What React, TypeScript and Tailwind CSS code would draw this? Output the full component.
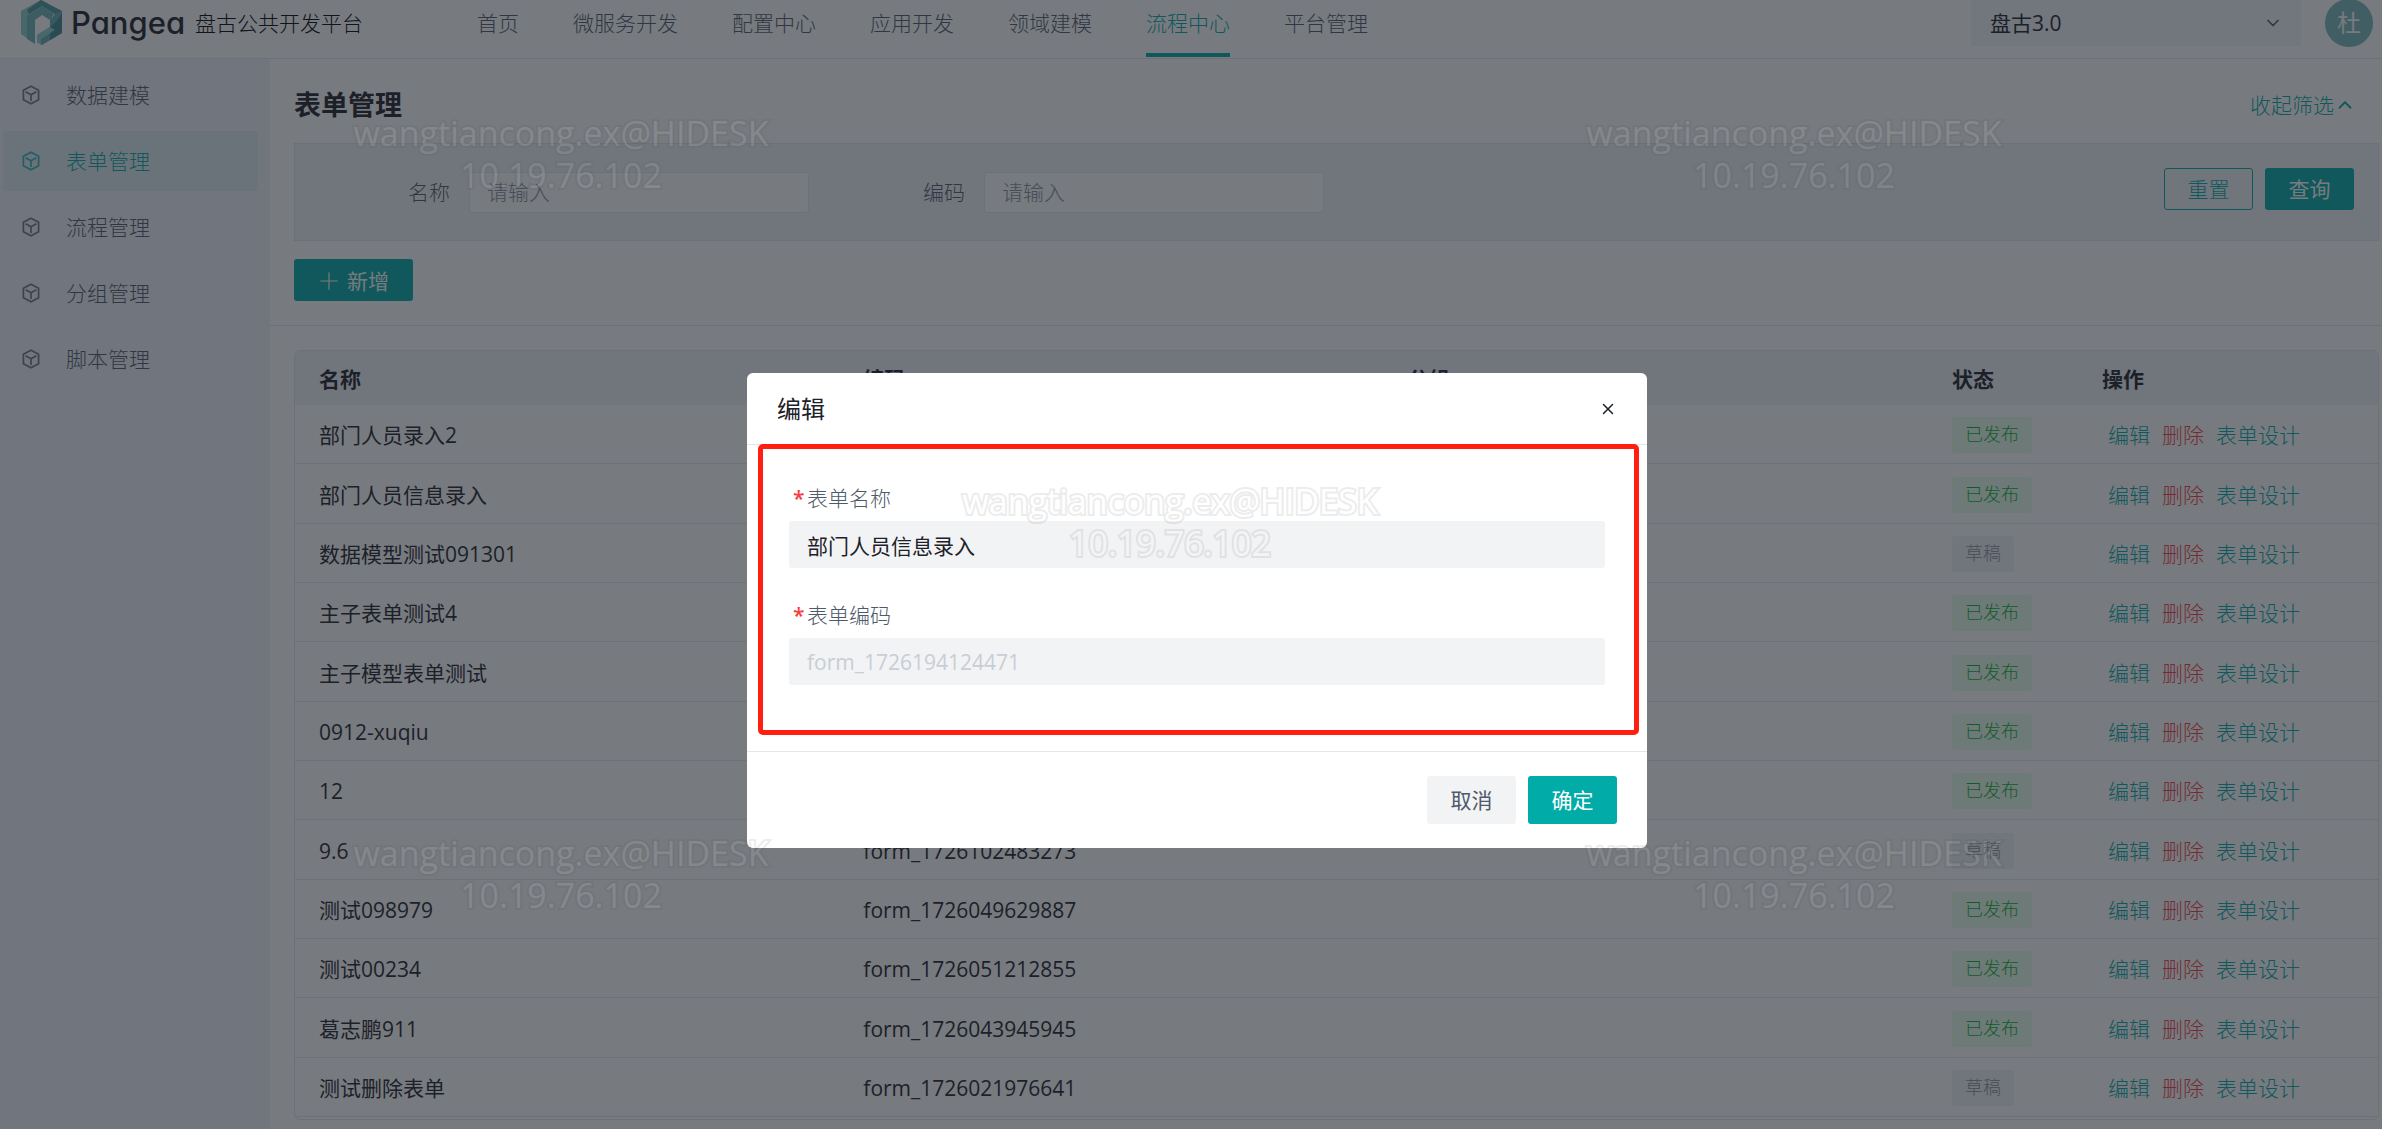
import { ChevronDown, ChevronUp, Plus, X } from 'lucide-react';

const NAV = ['首页', '微服务开发', '配置中心', '应用开发', '领域建模', '流程中心', '平台管理'];
const MENU = ['数据建模', '表单管理', '流程管理', '分组管理', '脚本管理'];

const ROWS = [
  { name: '部门人员录入2', code: 'form_1726196720235', published: true },
  { name: '部门人员信息录入', code: 'form_1726194124471', published: true },
  { name: '数据模型测试091301', code: 'form_1726191730418', published: false },
  { name: '主子表单测试4', code: 'form_1726190276632', published: true },
  { name: '主子模型表单测试', code: 'form_1726133810953', published: true },
  { name: '0912-xuqiu', code: 'form_1726128439027', published: true },
  { name: '12', code: 'form_1726110654781', published: true },
  { name: '9.6', code: 'form_1726102483273', published: false },
  { name: '测试098979', code: 'form_1726049629887', published: true },
  { name: '测试00234', code: 'form_1726051212855', published: true },
  { name: '葛志鹏911', code: 'form_1726043945945', published: true },
  { name: '测试删除表单', code: 'form_1726021976641', published: false },
];

// centre x / top y of every watermark stamp
const MARKS = [
  { x: 561, y: 112 },
  { x: 1794, y: 112 },
  { x: 1170, y: 480 },
  { x: 561, y: 832 },
  { x: 1794, y: 832 },
];

function CubeIcon() {
  return (
    <svg width="20" height="20" viewBox="0 0 20 20" fill="none" stroke="currentColor" strokeWidth="1.7" className="shrink-0 opacity-80">
      <path d="M10 1.2 L17.6 5.2 V14.8 L10 18.8 L2.4 14.8 V5.2 Z M4.6 6.8 L10 9.8 L15.4 6.8 M10 9.8 V16" />
    </svg>
  );
}

function Logo() {
  return (
    <svg width="42" height="46" viewBox="0 0 42 46" className="shrink-0">
      <path d="M0 11 L20 0 L26 3 L10 13 V41 L0 34 Z" fill="#8ccccb" />
      <path d="M6 16 L21 6 L33 14 L29 20 L21 15 L14 20 V44 L6 39 Z" fill="#6bb5b8" />
      <path d="M20 0 L41 11 V17 L35 20 V15 L21 6 L8 14 L6 10 Z" fill="#4a969c" />
      <path d="M41 11 V33 L21 45 L16 42 V35 L29 27 V20 L35 13 Z" fill="#5fadb0" />
      <path d="M41 13 V33 L29 40 V27 L34 23 Z" fill="#3f8b93" />
      <path d="M16 35 L29 27 L34 30 L20 39 V45 L16 42 Z" fill="#8fd0cf" />
    </svg>
  );
}

function Header() {
  return (
    <header className="flex h-[59px] items-start border-b border-[#e5e6eb] bg-white pr-[9px] pl-[21px]">
      <div className="flex h-[46px] w-[456px] items-center">
        <Logo />
        <span className="ml-2 w-[112px] font-[Inter] text-[31px] leading-[46px] font-medium text-[#1d2129] [font-feature-settings:'cv11']">Pangea</span>
        <span className="ml-3 text-black">盘古公共开发平台</span>
      </div>
      <nav className="flex gap-[54px] text-[#4e5969]">
        {NAV.map((item) => (
          <a
            key={item}
            href="#"
            className={item === '流程中心' ? 'h-[57px] border-b-4 border-[#00aba8] leading-[47px] text-[#00aba8]' : 'h-[57px] leading-[47px]'}
          >
            {item}
          </a>
        ))}
      </nav>
      <div className="relative ml-auto">
        <select aria-label="版本" className="h-[46px] w-[330px] appearance-none rounded-b-[3px] bg-[#f2f4f9] pl-[19px] font-normal text-[#1d2129]">
          <option>盘古3.0</option>
        </select>
        <ChevronDown size={20} strokeWidth={2} className="absolute top-[13px] right-[18px] text-[#4e5969]" />
      </div>
      <div className="-mt-px ml-6 size-12 rounded-full bg-[#76b8b8] text-center text-[24px] leading-[48px] font-normal text-white">杜</div>
    </header>
  );
}

function Sidebar() {
  return (
    <aside className="w-[270px] shrink-0 bg-[#f0f3fb] pt-[6px] pr-3 pl-[3px]">
      {MENU.map((item) => (
        <a
          key={item}
          href="#"
          className={
            item === '表单管理'
              ? 'mb-[6px] flex h-[60px] items-center gap-[25px] rounded-[3px] bg-[#e0eef2] pl-[18px] text-[#00aba8]'
              : 'mb-[6px] flex h-[60px] items-center gap-[25px] rounded-[3px] pl-[18px] text-[#4e5969]'
          }
        >
          <CubeIcon />
          {item}
        </a>
      ))}
    </aside>
  );
}

function FilterField({ id, label }: { id: string; label: string }) {
  return (
    <div className="flex items-center">
      <label htmlFor={id} className="mr-[19px] text-[#4e5969]">{label}</label>
      <input
        id={id}
        placeholder="请输入"
        className="h-[41px] w-[340px] rounded-[3px] border border-[#e5e6eb] bg-white px-[17px] placeholder:text-[#86909c]"
      />
    </div>
  );
}

function FormTable() {
  return (
    <div className="mt-6 ml-6 rounded-[6px] border border-[#e5e6eb] pb-[2px]">
      <table className="w-full table-fixed border-separate border-spacing-0 text-left text-[#1d2129]">
        <colgroup>
          <col />
          <col />
          <col />
          <col className="w-[150px]" />
          <col className="w-[300px]" />
        </colgroup>
        <thead>
          <tr className="h-[54px] bg-[#f1f3f8]">
            {['名称', '编码', '分组', '状态', '操作'].map((h) => (
              <th key={h} className="px-6 pt-[2px] font-bold">{h}</th>
            ))}
          </tr>
        </thead>
        <tbody>
          {ROWS.map((row) => (
            <tr key={row.code} className="h-[59px] nth-[3n+2]:h-[60px] [&>td]:border-b [&>td]:border-[#e5e6eb] [&>td]:pt-[2px]">
              <td className="px-6 font-normal">{row.name}</td>
              <td className="px-6 font-normal">{row.code}</td>
              <td className="px-6" />
              <td className="px-6">
                <span
                  className={
                    row.published
                      ? 'block h-9 w-fit rounded-[3px] bg-[#e8ffea] px-[13px] text-[18px] leading-[34px] text-[#00b42a]'
                      : 'block h-9 w-fit rounded-[3px] bg-[#f0f3f8] px-[13px] text-[18px] leading-[34px] text-[#86909c]'
                  }
                >
                  {row.published ? '已发布' : '草稿'}
                </span>
              </td>
              <td className="pl-[30px]">
                <div className="flex gap-3 text-[#00aba8]">
                  <button type="button">编辑</button>
                  <button type="button" className="text-[#f53f3f]">删除</button>
                  <button type="button">表单设计</button>
                </div>
              </td>
            </tr>
          ))}
        </tbody>
      </table>
    </div>
  );
}

function EditModal() {
  return (
    <div role="dialog" aria-label="编辑" className="mt-[373px] w-[900px] rounded-[6px] bg-white">
      <div className="flex h-[72px] items-center justify-between border-b border-[#e5e6eb] px-[30px]">
        <h2 className="text-[24px] font-normal text-[#1d2129]">编辑</h2>
        <button type="button" aria-label="关闭">
          <X size={18} strokeWidth={2} className="text-[#1d2129]" />
        </button>
      </div>

      <div className="relative px-[42px] pt-8 pb-[66px]">
        {/* highlight frame round the form */}
        <div className="pointer-events-none absolute -top-px right-2 bottom-4 left-[11px] rounded-[5px] border-[5px] border-[#ff1e0f]" />
        <label htmlFor="formName" className="flex h-11 items-center gap-1 pb-[2px] pl-1 text-[#4e5969]">
          <span className="w-[10px] font-semibold text-[#f53f3f]">*</span>表单名称
        </label>
        <input
          id="formName"
          defaultValue="部门人员信息录入"
          className="h-[47px] w-full rounded-[3px] bg-[#f2f3f5] px-[18px] font-normal text-[#1d2129]"
        />
        <label htmlFor="formCode" className="mt-[26px] flex h-11 items-center gap-1 pb-[2px] pl-1 text-[#4e5969]">
          <span className="w-[10px] font-semibold text-[#f53f3f]">*</span>表单编码
        </label>
        <input
          id="formCode"
          disabled
          defaultValue="form_1726194124471"
          className="h-[47px] w-full rounded-[3px] bg-[#f2f3f5] px-[18px] font-normal text-[#c9cdd4]"
        />
      </div>

      <div className="flex justify-end gap-3 border-t border-[#e5e6eb] px-[30px] py-6 font-normal">
        <button type="button" className="h-12 w-[89px] rounded-[3px] bg-[#f2f3f5] text-[#4e5969]">取消</button>
        <button type="button" className="h-12 w-[89px] rounded-[3px] bg-[#00aba8] text-white">确定</button>
      </div>
    </div>
  );
}

function Watermark() {
  return (
    <div className="pointer-events-none absolute inset-0 overflow-hidden text-center text-[34px] leading-[42px] font-normal whitespace-nowrap text-white opacity-10 [-webkit-text-stroke:4px_#505050] [paint-order:stroke_fill]">
      {MARKS.map((m) => (
        <div key={`${m.x}-${m.y}`} className="absolute w-[420px] -translate-x-1/2" style={{ left: m.x, top: m.y }}>
          wangtiancong.ex@HIDESK
          <br />
          10.19.76.102
        </div>
      ))}
    </div>
  );
}

export default function App() {
  return (
    <div className="relative flex h-screen flex-col overflow-hidden bg-white font-['Open_Sans','Noto_Sans_CJK_SC',sans-serif] text-[21px] leading-[32px] font-light">
      <Header />
      <div className="flex min-h-0 grow">
        <Sidebar />
        <main className="min-w-0 grow pr-[3px]">
          <div className="flex h-[84px] items-center justify-between pt-2 pr-[23px] pl-6">
            <h1 className="text-[27px] font-bold text-[#1d2129]">表单管理</h1>
            <button type="button" className="flex items-center text-[#00aba8]">
              收起筛选
              <ChevronUp size={22} strokeWidth={2} />
            </button>
          </div>

          <form className="ml-6 flex h-[98px] items-center border border-[#e5e6eb] bg-[#f1f4fa] pr-6 pl-[113px]">
            <div className="flex gap-[114px]">
              <FilterField id="name" label="名称" />
              <FilterField id="code" label="编码" />
            </div>
            <div className="ml-auto flex gap-3 pb-[6px]">
              <button type="button" className="h-[42px] w-[89px] rounded-[3px] border border-[#00aba8] text-[#00aba8]">重置</button>
              <button type="button" className="h-[42px] w-[89px] rounded-[3px] bg-[#00aba8] font-normal text-white">查询</button>
            </div>
          </form>

          <div className="-mr-[3px] border-b border-[#e5e6eb] py-6 pt-[18px] pl-6">
            <button type="button" className="flex h-[42px] w-[119px] items-center justify-center gap-1 rounded-[3px] bg-[#00aba8] pt-px pr-[3px] font-normal text-white">
              <Plus size={28} strokeWidth={1} />
              新增
            </button>
          </div>

          <FormTable />
        </main>
      </div>

      <div className="absolute inset-0 flex items-start justify-center bg-[#1d2129]/60 pl-3">
        <EditModal />
      </div>
      <Watermark />
    </div>
  );
}
